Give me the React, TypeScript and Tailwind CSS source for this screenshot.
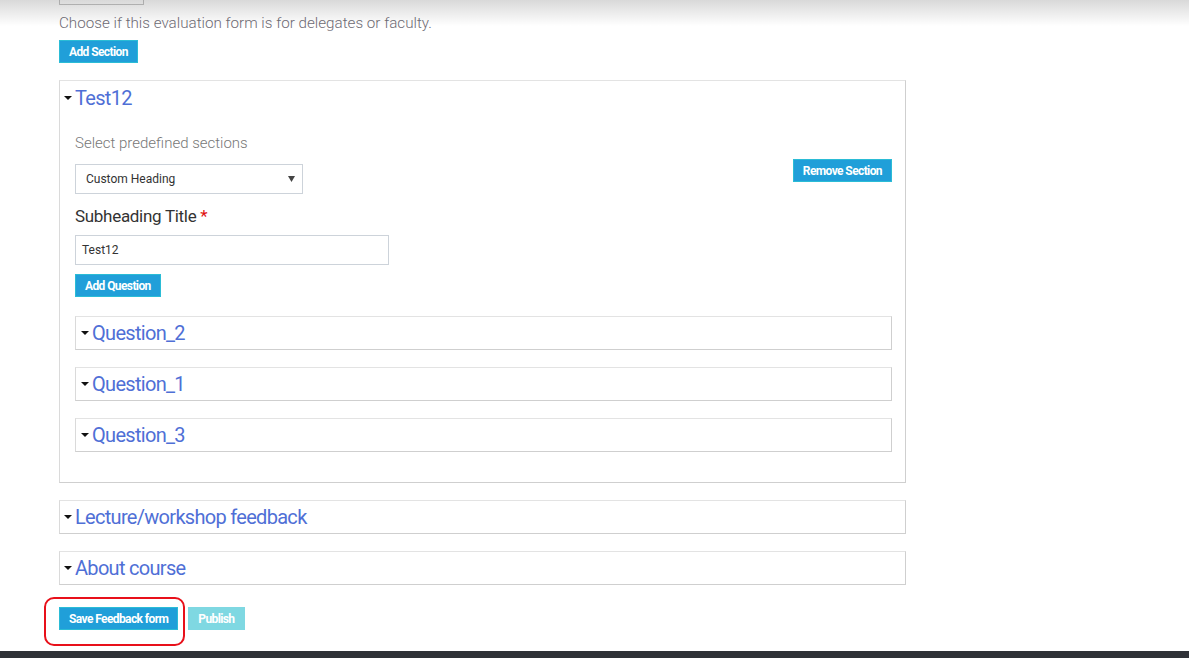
import React from "react";

const font = { fontFamily: "Roboto, 'Liberation Sans', sans-serif" };

function Caret() {
  return (
    <svg width="8" height="4" viewBox="0 0 8 4" className="mr-[3px] shrink-0">
      <path d="M0 0 L8 0 L4 4 Z" fill="#111" />
    </svg>
  );
}

function Btn({ label, light }: { label: string; light?: boolean }) {
  return (
    <button
      className={
        "h-[23px] px-[9px] border text-[12px] font-bold tracking-[-0.6px] text-white leading-none " +
        (light ? "bg-[#7fd8e2] border-[#7fd8e2]" : "bg-[#209fd9] border-[#2bbcd6]")
      }
    >
      {label}
    </button>
  );
}

function Collapsed({ title, nested }: { title: string; nested?: boolean }) {
  return (
    <div
      className={
        "h-[34px] flex items-center border border-[#cfcfcf] border-t-[#e3e3e3] border-l-[#dadada] " +
        (nested ? "pl-[5px]" : "pl-[4px]")
      }
    >
      <Caret />
      <span className="text-[20px] tracking-[-0.7px] text-[#4f6fd6] leading-none">{title}</span>
    </div>
  );
}

export default function App() {
  return (
    <div className="relative h-[658px] flex flex-col bg-white overflow-hidden" style={font}>
      <div className="absolute top-0 inset-x-0 h-[26px] bg-gradient-to-b from-black/15 to-transparent pointer-events-none" />

      <div className="pl-[59px] w-[906px]">
        <div className="w-[85px] h-[5px] border border-t-0 border-[#c8c8c8]" />

        <p className="mt-[9px] text-[15.2px] font-light text-[#6f6c75] leading-[18px]">
          Choose if this evaluation form is for delegates or faculty.
        </p>

        <div className="mt-[8px] flex">
          <Btn label="Add Section" />
        </div>

        <div className="mt-[17px] border border-[#cfcfcf] border-t-[#e3e3e3] border-l-[#dadada]">
          <div className="h-[33px] flex items-center pl-[4px]">
            <Caret />
            <span className="text-[20px] tracking-[-0.7px] text-[#4f6fd6] leading-none">Test12</span>
          </div>

          <div className="pl-[15px] pr-[13px] pb-[30px]">
            <p className="mt-[20px] text-[15px] font-light text-[#777] leading-[18px]">
              Select predefined sections
            </p>

            <div className="mt-[7px] flex justify-between items-start">
              <div className="mt-[5px] w-[228px] h-[30px] border border-[#cdd3da] flex items-center justify-between pl-[10px] pr-[7px]">
                <span className="text-[12px] text-[#333]">Custom Heading</span>
                <svg width="7" height="6" viewBox="0 0 7 6">
                  <path d="M0 0 L7 0 L3.5 6 Z" fill="#444" />
                </svg>
              </div>
              <Btn label="Remove Section" />
            </div>

            <p className="mt-[12px] text-[17px] tracking-[-0.3px] text-[#333] leading-[20px]">
              Subheading Title <span className="text-[#e01010]">*</span>
            </p>

            <div className="mt-[9px] w-[314px] h-[30px] border border-[#cdd3da] flex items-center pl-[6px]">
              <span className="text-[12px] text-[#333]">Test12</span>
            </div>

            <div className="mt-[9px] flex">
              <Btn label="Add Question" />
            </div>

            <div className="mt-[19px] flex flex-col gap-[17px]">
              <Collapsed title="Question_2" nested />
              <Collapsed title="Question_1" nested />
              <Collapsed title="Question_3" nested />
            </div>
          </div>
        </div>

        <div className="mt-[17px] flex flex-col gap-[17px]">
          <Collapsed title="Lecture/workshop feedback" />
          <Collapsed title="About course" />
        </div>

        <div className="relative mt-[22px] flex gap-[10px]">
          <Btn label="Save Feedback form" />
          <Btn label="Publish" light />
          <div className="absolute left-[-15px] top-[-10px] w-[141px] h-[49px] border-2 border-[#e8101a] rounded-[10px] pointer-events-none" />
        </div>
      </div>

      <div className="mt-auto h-[7px] bg-[#2f3237]" />
    </div>
  );
}
